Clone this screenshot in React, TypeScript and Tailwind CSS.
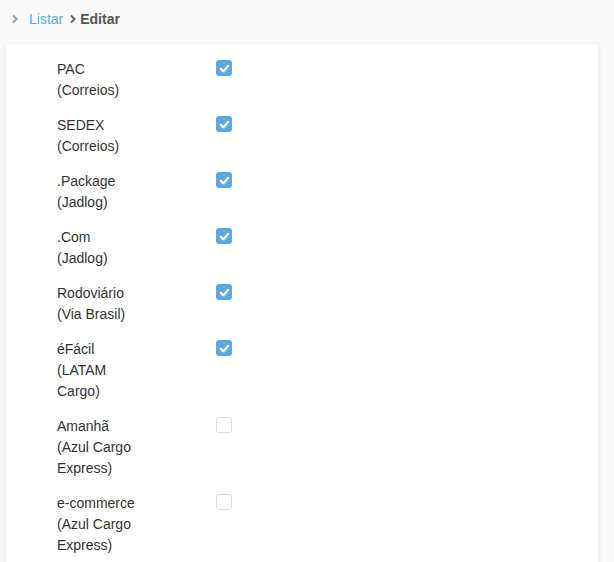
interface Carrier {
  lines: string[]
  enabled: boolean
}

const carriers: Carrier[] = [
  { lines: ['PAC', '(Correios)'], enabled: true },
  { lines: ['SEDEX', '(Correios)'], enabled: true },
  { lines: ['.Package', '(Jadlog)'], enabled: true },
  { lines: ['.Com', '(Jadlog)'], enabled: true },
  { lines: ['Rodoviário', '(Via Brasil)'], enabled: true },
  { lines: ['éFácil', '(LATAM', 'Cargo)'], enabled: true },
  { lines: ['Amanhã', '(Azul Cargo', 'Express)'], enabled: false },
  { lines: ['e-commerce', '(Azul Cargo', 'Express)'], enabled: false },
]

function Chevron({ className }: { className: string }) {
  return (
    <svg viewBox="0 0 8 10" className={className} fill="none" stroke="currentColor" strokeWidth="2">
      <polyline points="2,1.5 5.5,5 2,8.5" />
    </svg>
  )
}

export default function App() {
  return (
    <div
      className="min-h-[562px] bg-[#fafafa] text-[14px] text-[#333]"
      style={{ fontFamily: '"Liberation Sans", Arial, sans-serif' }}
    >
      {/* Breadcrumb */}
      <div className="flex h-[38px] items-center pl-[11px]">
        <Chevron className="w-[8px] h-[10px] text-[#9aa0a6]" />
        <span className="ml-[10px] text-[#5dade2]">Listar</span>
        <Chevron className="ml-[6px] w-[8px] h-[10px] text-[#666]" />
        <span className="ml-[3px] font-bold text-[#555]">Editar</span>
      </div>

      {/* Card */}
      <div className="ml-[6px] mr-[16px] mt-[6px] rounded-[4px] bg-white pl-[51px] pt-[15px] pb-[20px] shadow-[0_1px_5px_rgba(0,0,0,0.1)]">
        <div className="flex flex-col gap-[14px]">
          {carriers.map((c) => (
            <div key={c.lines.join(' ')} className="flex items-start">
              <div className="w-[159px] leading-[21px]">
                {c.lines.map((l) => (
                  <div key={l}>{l}</div>
                ))}
              </div>
              {c.enabled ? (
                <div className="mt-[1px] flex h-[16px] w-[16px] items-center justify-center rounded-[3px] bg-[#5fa7e2]">
                  <svg viewBox="0 0 12 12" className="h-[11px] w-[11px]" fill="none" stroke="white" strokeWidth="2.6" strokeLinecap="round" strokeLinejoin="round">
                    <polyline points="2,6.3 4.8,9 10,3.2" />
                  </svg>
                </div>
              ) : (
                <div className="mt-[1px] h-[16px] w-[16px] rounded-[3px] border border-[#dcdcdc] bg-white" />
              )}
            </div>
          ))}
        </div>
      </div>
    </div>
  )
}
